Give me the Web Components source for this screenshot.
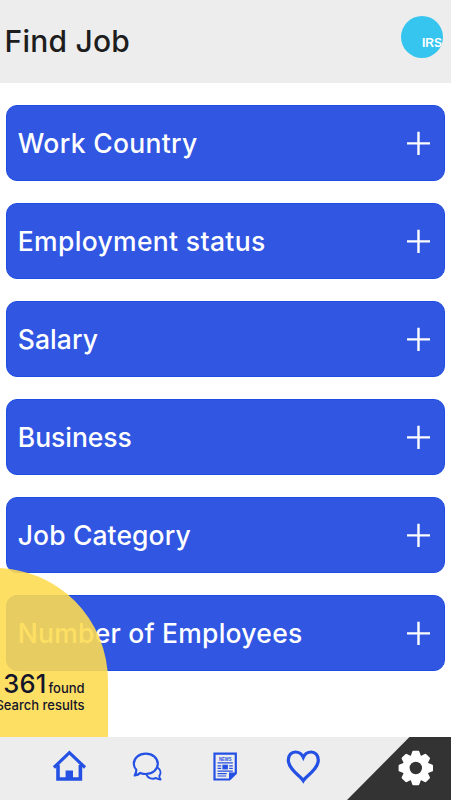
<!DOCTYPE html>
<html lang="en">
<head>
<meta charset="utf-8">
<meta name="viewport" content="width=device-width, initial-scale=1">
<title>Find Job</title>
<style>
  body {
    margin: 0;
    background: #fff;
    font-family: Inter, "Liberation Sans", sans-serif;
    font-weight: 500;
  }
</style>
</head>
<body>
<job-app>
  <job-header slot="header" user="IRS">Find Job</job-header>
  <filter-item style="--track: 0.32px">Work Country</filter-item>
  <filter-item style="--track: 0.33px">Employment status</filter-item>
  <filter-item style="--track: 0.08px">Salary</filter-item>
  <filter-item style="--track: -0.04px">Business</filter-item>
  <filter-item style="--track: 0.1px">Job Category</filter-item>
  <filter-item style="--track: 0.24px">Number of Employees</filter-item>
  <result-badge slot="badge" count="361"></result-badge>
  <tab-bar slot="footer"></tab-bar>
</job-app>

<script>
class JobApp extends HTMLElement {
  constructor() {
    super();
    this.attachShadow({ mode: 'open' });
  }

  connectedCallback() {
    this.shadowRoot.innerHTML = `
      <style>
        :host {
          display: flex;
          flex-direction: column;
          position: relative;
          height: 100vh;
          overflow: hidden;
        }
        main {
          flex: 1;
          min-height: 0;
          box-sizing: border-box;
          display: flex;
          flex-direction: column;
          gap: 22.7px;
          padding: 22.8px 6.4px 0 5.6px;
        }
      </style>
      <slot name="header"></slot>
      <main><slot></slot></main>
      <slot name="badge"></slot>
      <slot name="footer"></slot>
    `;
  }
}

class JobHeader extends HTMLElement {
  constructor() {
    super();
    this.attachShadow({ mode: 'open' });
  }

  connectedCallback() {
    this.shadowRoot.innerHTML = `
      <style>
        :host {
          display: flex;
          flex: none;
          justify-content: space-between;
          align-items: flex-start;
          box-sizing: border-box;
          height: 82.5px;
          padding: 16px 8px 0 4.6px;
          background: #ededed;
        }
        h1 {
          margin: 7px 0 0;
          font-size: 30px;
          font-weight: 500;
          line-height: 36px;
          letter-spacing: 0.2px;
          color: #1d1d1d;
        }
        .avatar {
          display: flex;
          justify-content: flex-end;
          width: 42px;
          height: 42px;
          border-radius: 50%;
          overflow: hidden;
          background: #36c5ef;
          color: #fff;
          font: 700 12px/14px "Liberation Sans", sans-serif;
        }
        .avatar span {
          margin: 20px 1px 0 0;
        }
      </style>
      <h1><slot></slot></h1>
      <div class="avatar"><span>${this.getAttribute('user')}</span></div>
    `;
  }
}

class FilterItem extends HTMLElement {
  constructor() {
    super();
    this.attachShadow({ mode: 'open' });
  }

  connectedCallback() {
    this.shadowRoot.innerHTML = `
      <style>
        :host {
          display: flex;
          flex: none;
          align-items: center;
          justify-content: space-between;
          box-sizing: border-box;
          height: 75.3px;
          padding: 0 14px 0 11.2px;
          border: 1px solid #1f4de2;
          border-radius: 11px;
          background: #3056e2;
          color: #fff;
          font-size: 26.5px;
          line-height: 32px;
          letter-spacing: var(--track, 0);
          white-space: nowrap;
        }
        svg {
          display: block;
          flex: none;
        }
      </style>
      <span><slot></slot></span>
      <svg width="23" height="24" viewBox="0 0 23 24" stroke="#fff" stroke-width="2.4">
        <path d="M0 12.4h23M11.5 .8v23.2"/>
      </svg>
    `;
  }
}

class ResultBadge extends HTMLElement {
  constructor() {
    super();
    this.attachShadow({ mode: 'open' });
  }

  connectedCallback() {
    this.shadowRoot.innerHTML = `
      <style>
        :host {
          display: flex;
          flex-direction: column;
          align-items: flex-end;
          justify-content: flex-end;
          position: absolute;
          left: -6px;
          bottom: 63.5px;
          box-sizing: border-box;
          width: 113.6px;
          height: 168.5px;
          padding: 0 23px 23px 0;
          border-top-right-radius: 113px;
          background: rgba(253, 219, 81, 0.89);
          color: #14142a;
          white-space: nowrap;
        }
        .count {
          display: flex;
          align-items: baseline;
          gap: 2px;
          font-size: 13px;
          line-height: 17px;
        }
        b {
          font-size: 25.5px;
          font-weight: 500;
          letter-spacing: 0.2px;
        }
        .label {
          font-size: 13px;
          line-height: 17px;
        }
      </style>
      <div class="count"><b>${this.getAttribute('count')}</b><span>found</span></div>
      <div class="label">Search results</div>
    `;
  }
}

class TabBar extends HTMLElement {
  constructor() {
    super();
    this.attachShadow({ mode: 'open' });
  }

  // the gear outline: eight teeth around a ring
  gear() {
    let teeth = '';
    for (let a = 0; a < 360; a += 45) {
      teeth += `<path d="M-5.4-11 L-3.6-16.2 Q-3.3-17.2 -2.4-17.2 H2.4 Q3.3-17.2 3.6-16.2 L5.4-11z" transform="rotate(${a})"/>`;
    }
    return teeth;
  }

  connectedCallback() {
    this.shadowRoot.innerHTML = `
      <style>
        :host {
          display: grid;
          flex: none;
          grid-template-columns: 30px 78px 78px 78px 77px 110px;
          height: 63.5px;
          background: #ededed;
          color: #2450e4;
        }
        a {
          display: flex;
          justify-content: center;
          color: inherit;
        }
        svg {
          display: block;
          fill: none;
          stroke: currentColor;
        }
        .tab svg {
          margin-top: 10.5px;
        }
        .settings {
          background: #333;
          clip-path: polygon(69px 0, 100% 0, 100% 100%, 6px 100%);
          justify-content: flex-end;
        }
      </style>
      <span></span>
      <a class="tab"><svg width="40" height="40" viewBox="0 0 40 40">
        <path d="M9 18v14h22.400V18" stroke-width="3.600"/>
        <path d="M4.900 20.500 20.400 5.700 36 20.500" stroke-width="3.200"/>
        <path d="M16.600 23.500h7.400V32h-7.400z" fill="currentColor" stroke="none"/>
      </svg></a>
      <a class="tab"><svg width="40" height="40" viewBox="0 0 40 40" stroke-width="2.200" stroke-linejoin="round">
        <path d="M18.800 6.600c6.900 0 12 4.500 12 10.200S25.700 27 18.800 27c-1.900 0-3.800-.4-5.400-1.100-1.600 1.500-3.400 2.300-5.700 2.600 1-1.800 1.700-3.500 1.600-5.800C7.600 21 6.800 19 6.800 16.800c0-5.700 5.100-10.200 12-10.200z"/>
        <path d="M30.900 20.800c2.600 2 3.500 5.300 1.400 8.300-.1 1.300.5 2.400 1.300 3.500-1.900-.1-3.300-.7-4.500-1.600-3.600 1.500-8.200.6-9.900-3.600" stroke-width="1.900"/>
      </svg></a>
      <a class="tab"><svg width="40" height="40" viewBox="0 0 40 40">
        <path d="M9.500 6.600h21.300v19.600l-6.300 6.300h-15z" stroke-width="2.200"/>
        <path d="M24 33v-7.400h7.400z" fill="currentColor" stroke="none"/>
        <text x="20.200" y="14" text-anchor="middle" textLength="12.500" lengthAdjust="spacingAndGlyphs" font-family="Liberation Sans, sans-serif" font-weight="700" font-size="5" fill="currentColor" stroke="none">NEWS</text>
        <path d="M12.500 15.900h15.300M12.500 18.900h3.700M12.500 21.400h3.700M24.200 18.900h3.600M24.200 21.400h3.600M12.500 24.100h15.300M12.500 26.600h9.200M12.500 29h8.700" stroke-width="1.200"/>
        <path d="M17.400 17.700h5.500V22.400h-5.500z" fill="currentColor" stroke="none"/>
      </svg></a>
      <a class="tab"><svg width="40" height="40" viewBox="0 0 40 40">
        <path d="M20.300 33.700C17.500 29 5.300 22.500 5.300 12.900 5.300 7.900 8.600 5 12.300 5c3.600 0 6.500 2 8 5.300 1.500-3.300 4.400-5.300 8-5.300 3.700 0 7 2.900 7 7.900C35.300 22.500 23.100 29 20.300 33.700z" stroke-width="3.200"/>
      </svg></a>
      <a class="settings"><svg width="70" height="62" viewBox="0 0 70 62">
        <g transform="translate(34.800 31)">
          <g fill="#fff" stroke="none">
            <circle r="13.200"/>${this.gear()}
          </g>
          <circle r="6.200" fill="#333" stroke="none"/>
        </g>
      </svg></a>
    `;
  }
}

customElements.define('job-app', JobApp);
customElements.define('job-header', JobHeader);
customElements.define('filter-item', FilterItem);
customElements.define('result-badge', ResultBadge);
customElements.define('tab-bar', TabBar);
</script>
</body>
</html>
